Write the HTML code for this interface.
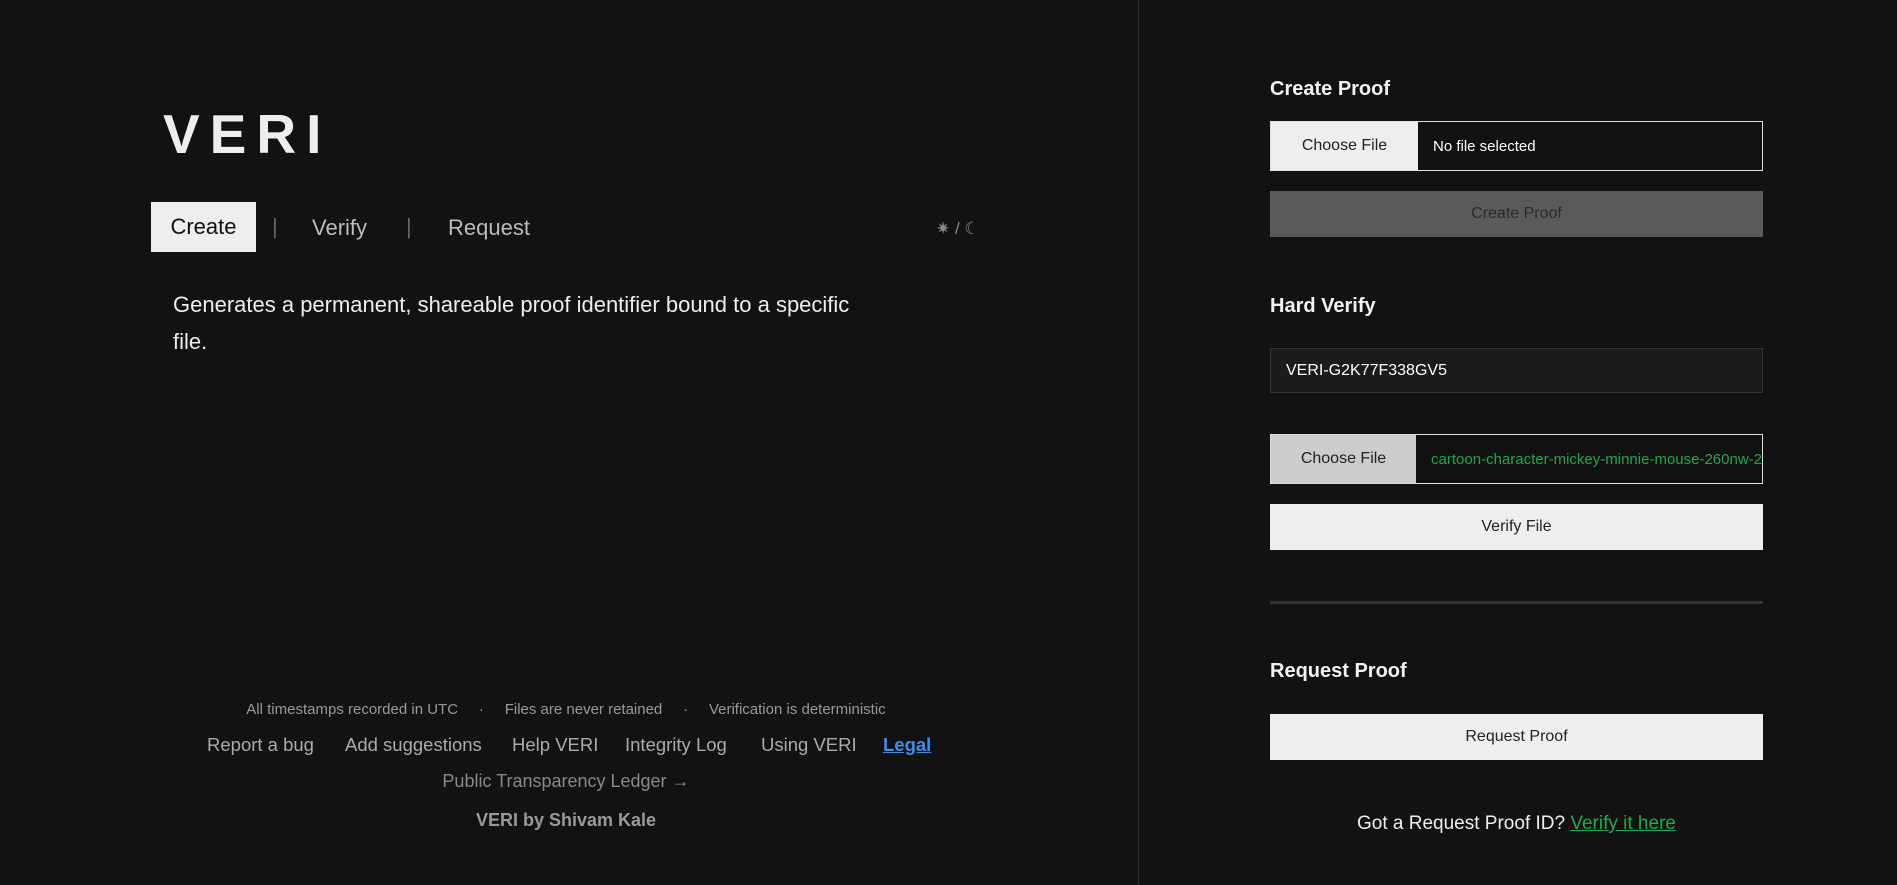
<!DOCTYPE html>
<html><head><meta charset="utf-8"><style>
*{margin:0;padding:0;box-sizing:border-box}
body{width:1897px;height:885px;background:#121212;font-family:"Liberation Sans",sans-serif;color:#eee;position:relative;overflow:hidden}
.a{position:absolute;white-space:nowrap}
.div{position:absolute;left:1138px;top:0;width:1px;height:885px;background:#2a2a2a}
.h{font-weight:bold;font-size:20px;color:#f2f2f2}
.fi{position:absolute;left:1270px;width:493px;height:50px;border:1px solid #ddd;background:#111;display:flex;align-items:center}
.fi .b{width:147px;height:100%;background:#eee;color:#222;font-size:16px;display:flex;align-items:center;justify-content:center}
.btn{position:absolute;left:1270px;width:493px;height:46px;background:#eee;color:#222;font-size:16px;display:flex;align-items:center;justify-content:center}
.f{color:#aaa;font-size:18.5px}
</style></head><body>
<div class="div"></div>
<div class="a" style="left:163px;top:102px;font-size:55px;font-weight:bold;letter-spacing:10px;color:#eee">VERI</div>
<div class="a" style="left:151px;top:202px;width:105px;height:50px;background:#eee;color:#111;font-size:22px;display:flex;align-items:center;justify-content:center">Create</div>
<div class="a" style="left:272px;top:214px;font-size:22px;color:#666">|</div>
<div class="a" style="left:312px;top:215px;font-size:22px;color:#bbb">Verify</div>
<div class="a" style="left:406px;top:214px;font-size:22px;color:#666">|</div>
<div class="a" style="left:448px;top:215px;font-size:22px;color:#bbb">Request</div>
<div class="a" style="left:936px;top:219px;font-size:17px;color:#888">✷ / ☾</div>
<div class="a" style="left:173px;top:286px;font-size:22px;line-height:37px;color:#eee;white-space:normal;width:760px">Generates a permanent, shareable proof identifier bound to a specific<br>file.</div>
<div class="a" style="left:0;width:1132px;top:701px;text-align:center;font-size:15px;color:#999">All timestamps recorded in UTC &nbsp;&nbsp;&nbsp;&nbsp;· &nbsp;&nbsp;&nbsp;&nbsp;Files are never retained &nbsp;&nbsp;&nbsp;&nbsp;· &nbsp;&nbsp;&nbsp;&nbsp;Verification is deterministic</div>
<div class="a f" style="left:207px;top:734px">Report a bug</div>
<div class="a f" style="left:345px;top:734px">Add suggestions</div>
<div class="a f" style="left:512px;top:734px">Help VERI</div>
<div class="a f" style="left:625px;top:734px">Integrity Log</div>
<div class="a f" style="left:761px;top:734px">Using VERI</div>
<div class="a f" style="left:883px;top:734px;color:#3b8eea;text-decoration:underline;font-weight:bold">Legal</div>
<div class="a" style="left:0;width:1132px;top:771px;text-align:center;font-size:18px;color:#888">Public Transparency Ledger →</div>
<div class="a" style="left:0;width:1132px;top:810px;text-align:center;font-size:18px;color:#999;font-weight:bold">VERI by Shivam Kale</div>

<div class="a h" style="left:1270px;top:78px">Create Proof</div>
<div class="fi" style="top:121px"><div class="b">Choose File</div><span style="margin-left:15px;font-size:15px;color:#fff">No file selected</span></div>
<div class="btn" style="top:191px;background:#5a5a5a;color:#2a2a2a">Create Proof</div>
<div class="a h" style="left:1270px;top:295px">Hard Verify</div>
<div class="a" style="left:1270px;top:348px;width:493px;height:45px;background:#1b1b1b;border:1px solid #333;font-size:16px;color:#fff;padding-left:15px;line-height:43px">VERI-G2K77F338GV5</div>
<div class="fi" style="top:434px;overflow:hidden"><div class="b" style="background:#ccc">Choose File</div><span style="margin-left:15px;font-size:15px;color:#1fa64a;white-space:nowrap">cartoon-character-mickey-minnie-mouse-260nw-2</span></div>
<div class="btn" style="top:504px">Verify File</div>
<div class="a" style="left:1270px;top:601px;width:493px;height:3px;background:#333"></div>
<div class="a h" style="left:1270px;top:660px">Request Proof</div>
<div class="btn" style="top:714px">Request Proof</div>
<div class="a" style="left:1270px;width:493px;top:813px;text-align:center;font-size:19px;color:#eee">Got a Request Proof ID? <span style="color:#22a84e;text-decoration:underline">Verify it here</span></div>
</body></html>
